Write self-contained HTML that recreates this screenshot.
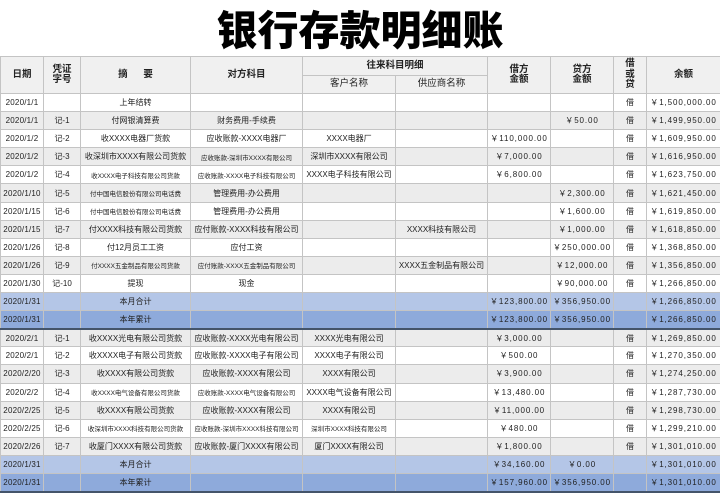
<!DOCTYPE html>
<html><head><meta charset="utf-8"><style>
*{margin:0;padding:0;box-sizing:border-box}
body{width:720px;height:491px;overflow:hidden;background:#fff;font-family:"Liberation Sans","Noto Sans CJK SC",sans-serif;color:#222}
h1{position:absolute;left:0;top:2px;width:720px;text-align:center;font-family:"Noto Sans CJK SC",sans-serif;font-weight:900;font-size:41px;line-height:50px;color:#000}
table{position:absolute;left:0;top:56px;width:720px;border-collapse:collapse;table-layout:fixed}
td,th{border:1px solid #c4c4c4;text-align:center;font-size:8px;height:18.1px;padding:0;white-space:nowrap;overflow:hidden;font-weight:normal}
th{background:#f0f0f0;font-weight:bold;font-size:9.5px;height:18.5px;line-height:10.5px}
th.s{font-weight:normal}
td:nth-child(1){letter-spacing:.2px}
td:nth-child(7),td:nth-child(8),td:nth-child(10){letter-spacing:.9px}
tr.g td{background:#ececec}
tr.m td{background:#b4c6e7}
tr.y td{background:#8eaadb}
tr.y td{border-bottom:2px solid #44546a}
td.sm{font-size:6.5px}
</style></head><body>
<h1>银行存款明细账</h1>
<table>
<colgroup><col style="width:43px"><col style="width:37px"><col style="width:110px"><col style="width:112px"><col style="width:93px"><col style="width:92px"><col style="width:63px"><col style="width:63px"><col style="width:33px"><col style="width:74px"></colgroup>
<tr><th rowspan="2">日期</th><th rowspan="2">凭证<br>字号</th><th rowspan="2">摘&nbsp;&nbsp;&nbsp;&nbsp;&nbsp;&nbsp;要</th><th rowspan="2">对方科目</th><th colspan="2">往来科目明细</th><th rowspan="2">借方<br>金额</th><th rowspan="2">贷方<br>金额</th><th rowspan="2">借<br>或<br>贷</th><th rowspan="2">余额</th></tr>
<tr><th class="s">客户名称</th><th class="s">供应商名称</th></tr>
<tr><td>2020/1/1</td><td></td><td>上年结转</td><td></td><td></td><td></td><td></td><td></td><td>借</td><td>￥1,500,000.00</td></tr>
<tr class="g"><td>2020/1/1</td><td>记-1</td><td>付网银清算费</td><td>财务费用-手续费</td><td></td><td></td><td></td><td>￥50.00</td><td>借</td><td>￥1,499,950.00</td></tr>
<tr><td>2020/1/2</td><td>记-2</td><td>收XXXX电器厂货款</td><td>应收账款-XXXX电器厂</td><td>XXXX电器厂</td><td></td><td>￥110,000.00</td><td></td><td>借</td><td>￥1,609,950.00</td></tr>
<tr class="g"><td>2020/1/2</td><td>记-3</td><td>收深圳市XXXX有限公司货款</td><td class="sm">应收账款-深圳市XXXX有限公司</td><td>深圳市XXXX有限公司</td><td></td><td>￥7,000.00</td><td></td><td>借</td><td>￥1,616,950.00</td></tr>
<tr><td>2020/1/2</td><td>记-4</td><td class="sm">收XXXX电子科技有限公司货款</td><td class="sm">应收账款-XXXX电子科技有限公司</td><td>XXXX电子科技有限公司</td><td></td><td>￥6,800.00</td><td></td><td>借</td><td>￥1,623,750.00</td></tr>
<tr class="g"><td>2020/1/10</td><td>记-5</td><td class="sm">付中国电信股份有限公司电话费</td><td>管理费用-办公费用</td><td></td><td></td><td></td><td>￥2,300.00</td><td>借</td><td>￥1,621,450.00</td></tr>
<tr><td>2020/1/15</td><td>记-6</td><td class="sm">付中国电信股份有限公司电话费</td><td>管理费用-办公费用</td><td></td><td></td><td></td><td>￥1,600.00</td><td>借</td><td>￥1,619,850.00</td></tr>
<tr class="g"><td>2020/1/15</td><td>记-7</td><td>付XXXX科技有限公司货款</td><td>应付账款-XXXX科技有限公司</td><td></td><td>XXXX科技有限公司</td><td></td><td>￥1,000.00</td><td>借</td><td>￥1,618,850.00</td></tr>
<tr><td>2020/1/26</td><td>记-8</td><td>付12月员工工资</td><td>应付工资</td><td></td><td></td><td></td><td>￥250,000.00</td><td>借</td><td>￥1,368,850.00</td></tr>
<tr class="g"><td>2020/1/26</td><td>记-9</td><td class="sm">付XXXX五金制品有限公司货款</td><td class="sm">应付账款-XXXX五金制品有限公司</td><td></td><td>XXXX五金制品有限公司</td><td></td><td>￥12,000.00</td><td>借</td><td>￥1,356,850.00</td></tr>
<tr><td>2020/1/30</td><td>记-10</td><td>提现</td><td>现金</td><td></td><td></td><td></td><td>￥90,000.00</td><td>借</td><td>￥1,266,850.00</td></tr>
<tr class="m"><td>2020/1/31</td><td></td><td>本月合计</td><td></td><td></td><td></td><td>￥123,800.00</td><td>￥356,950.00</td><td></td><td>￥1,266,850.00</td></tr>
<tr class="y"><td>2020/1/31</td><td></td><td>本年累计</td><td></td><td></td><td></td><td>￥123,800.00</td><td>￥356,950.00</td><td></td><td>￥1,266,850.00</td></tr>
<tr class="g"><td>2020/2/1</td><td>记-1</td><td>收XXXX光电有限公司货款</td><td>应收账款-XXXX光电有限公司</td><td>XXXX光电有限公司</td><td></td><td>￥3,000.00</td><td></td><td>借</td><td>￥1,269,850.00</td></tr>
<tr><td>2020/2/1</td><td>记-2</td><td>收XXXX电子有限公司货款</td><td>应收账款-XXXX电子有限公司</td><td>XXXX电子有限公司</td><td></td><td>￥500.00</td><td></td><td>借</td><td>￥1,270,350.00</td></tr>
<tr class="g"><td>2020/2/20</td><td>记-3</td><td>收XXXX有限公司货款</td><td>应收账款-XXXX有限公司</td><td>XXXX有限公司</td><td></td><td>￥3,900.00</td><td></td><td>借</td><td>￥1,274,250.00</td></tr>
<tr><td>2020/2/2</td><td>记-4</td><td class="sm">收XXXX电气设备有限公司货款</td><td class="sm">应收账款-XXXX电气设备有限公司</td><td>XXXX电气设备有限公司</td><td></td><td>￥13,480.00</td><td></td><td>借</td><td>￥1,287,730.00</td></tr>
<tr class="g"><td>2020/2/25</td><td>记-5</td><td>收XXXX有限公司货款</td><td>应收账款-XXXX有限公司</td><td>XXXX有限公司</td><td></td><td>￥11,000.00</td><td></td><td>借</td><td>￥1,298,730.00</td></tr>
<tr><td>2020/2/25</td><td>记-6</td><td class="sm">收深圳市XXXX科技有限公司货款</td><td class="sm">应收账款-深圳市XXXX科技有限公司</td><td class="sm">深圳市XXXX科技有限公司</td><td></td><td>￥480.00</td><td></td><td>借</td><td>￥1,299,210.00</td></tr>
<tr class="g"><td>2020/2/26</td><td>记-7</td><td>收厦门XXXX有限公司货款</td><td>应收账款-厦门XXXX有限公司</td><td>厦门XXXX有限公司</td><td></td><td>￥1,800.00</td><td></td><td>借</td><td>￥1,301,010.00</td></tr>
<tr class="m"><td>2020/1/31</td><td></td><td>本月合计</td><td></td><td></td><td></td><td>￥34,160.00</td><td>￥0.00</td><td></td><td>￥1,301,010.00</td></tr>
<tr class="y"><td>2020/1/31</td><td></td><td>本年累计</td><td></td><td></td><td></td><td>￥157,960.00</td><td>￥356,950.00</td><td></td><td>￥1,301,010.00</td></tr>
</table>
</body></html>
